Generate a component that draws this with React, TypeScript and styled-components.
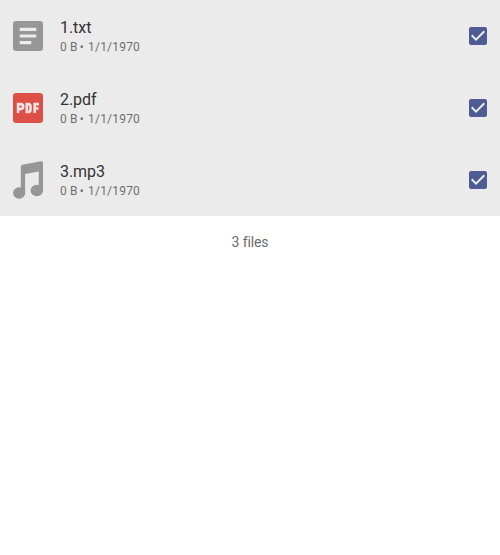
import React from "react";
import styled, { createGlobalStyle } from "styled-components";

const GlobalStyle = createGlobalStyle`
  body {
    margin: 0;
    background: #fff;
    font-family: Roboto, sans-serif;
  }
`;

const List = styled.ul`
  margin: 0;
  padding: 0;
  list-style: none;
`;

const Row = styled.li`
  display: flex;
  align-items: center;
  height: 72px;
  padding: 0 10px 0 8px;
  box-sizing: border-box;
  background: #ebebeb;
`;

const FileIcon = styled.svg`
  width: 40px;
  height: 40px;
  margin-right: 12px;
  flex: none;
`;

const Details = styled.div`
  flex: 1;
  min-width: 0;
`;

const Name = styled.div`
  font-size: 16px;
  line-height: 20px;
  letter-spacing: -0.05px;
  color: #333;
`;

const Meta = styled.div`
  display: flex;
  margin-top: 1px;
  font-size: 12px;
  line-height: 16px;
  letter-spacing: 0.2px;
  color: #707070;
`;

const Dot = styled.span`
  margin: 0 4px 0 2px;
`;

const Check = styled.svg`
  width: 24px;
  height: 24px;
  flex: none;
`;

const Footer = styled.div`
  padding-top: 16px;
  text-align: center;
  font-size: 14px;
  line-height: 20px;
  letter-spacing: -0.1px;
  color: #6b6b6b;
`;

type Kind = "text" | "pdf" | "audio";

const Glyph = ({ kind }: { kind: Kind }) => (
  <FileIcon viewBox="0 0 40 40">
    {kind === "text" && (
      <>
        <rect x="5" y="5" width="30" height="30" rx="3.3" fill="#969696" />
        <path d="M11.7 11.7h16.6V15H11.7zM11.7 18.4h16.6v3.2H11.7zM11.7 25h11.6v3.3H11.7z" fill="#ebebeb" />
      </>
    )}
    {kind === "pdf" && (
      <>
        <rect x="5" y="5" width="30" height="30" rx="3.3" fill="#de5047" />
        <path
          d="M10.1 25V16.1h2.6a2.2 2.2 0 0 1 0 4.9h-2.6M18.8 16.1v7.8h1.5a2.2 2.2 0 0 0 2.2-2.2v-3.4a2.2 2.2 0 0 0-2.2-2.2zM26.7 25V16.1H31M26.7 20.5h3.8"
          fill="none"
          stroke="#f1e5e4"
          strokeWidth="2.6"
        />
      </>
    )}
    {kind === "audio" && (
      <g fill="#969696">
        <path d="M12.8 33V7c0-1.2.6-1.9 1.8-2.2l18.3-3.5c1.3-.3 2.1.4 2.1 1.7V30.5h-4.3V11.4L17.1 14.1V33z" />
        <ellipse cx="11.1" cy="33" rx="6.1" ry="5.8" />
        <ellipse cx="28.8" cy="30.5" rx="6.2" ry="5.8" />
      </g>
    )}
  </FileIcon>
);

const files: { name: string; kind: Kind }[] = [
  { name: "1.txt", kind: "text" },
  { name: "2.pdf", kind: "pdf" },
  { name: "3.mp3", kind: "audio" },
];

export default function App() {
  return (
    <>
      <GlobalStyle />
      <List>
        {files.map(({ name, kind }) => (
          <Row key={name}>
            <Glyph kind={kind} />
            <Details>
              <Name>{name}</Name>
              <Meta>
                <span>0 B</span>
                <Dot>•</Dot>
                <span>1/1/1970</span>
              </Meta>
            </Details>
            <Check viewBox="0 0 24 24">
              <path
                fill="#4f5b93"
                d="M19 3H5c-1.11 0-2 .9-2 2v14c0 1.1.89 2 2 2h14c1.11 0 2-.9 2-2V5c0-1.1-.89-2-2-2zm-9 14-5-5 1.41-1.41L10 14.17l7.59-7.59L19 8l-9 9z"
              />
            </Check>
          </Row>
        ))}
      </List>
      <Footer>{files.length} files</Footer>
    </>
  );
}
